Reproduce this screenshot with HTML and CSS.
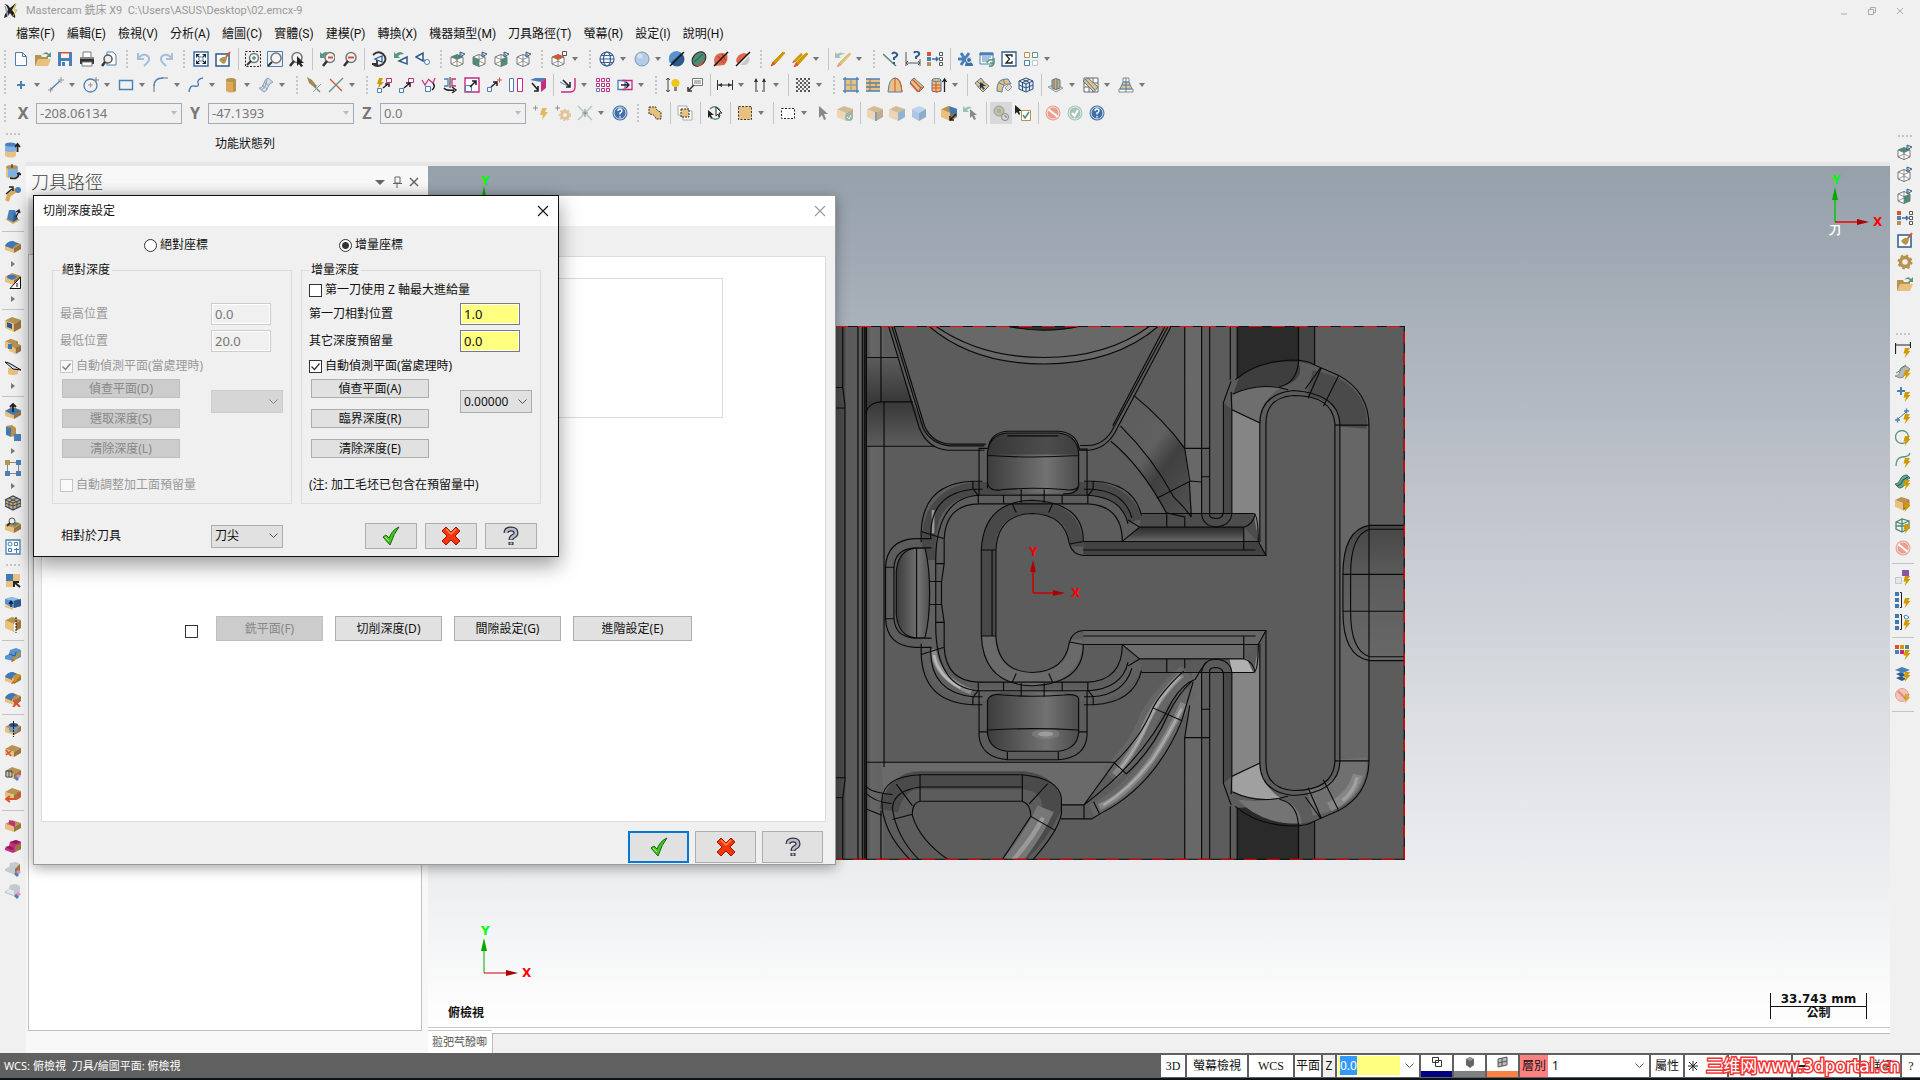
FILE: index.html
```html
<!DOCTYPE html>
<html lang="zh-Hant">
<head>
    <meta charset="UTF-8">
    <meta name="viewport" content="width=device-width, initial-scale=1.0">
    <title>Mastercam 銑床 X9</title>
    <link rel="stylesheet" href="styles.css">
</head>
<body>

    <!-- icon shapes, 16x16 each -->
    <svg class="sprite" aria-hidden="true">
        <defs>
            <path id="bolt" d="M10 6h5l-2 3h2.500l-6 7 1.500-4.500H8.500z" fill="#cf9a00"/>
            <path id="eye" d="M10 1l5 2-5 3zM11 2.500v2" fill="#dfe8f2" stroke="#3a5f88"/>
            <g id="wire" fill="none" stroke="#777"><path fill="#fff" d="M1 6l6-2.500L13 6v7l-6 2.500L1 13z"/><path d="M1 6l6 2.500L13 6M7 8.500v7M7 3.500v6M1 13l6-3 6 3" stroke-width=".8"/></g>
            <g id="box"><path d="M0 4.500L7 1l9 3-7 4z" fill="#b8924f"/><path d="M0 4.500L9 8v8l-9-4z" fill="#e8c080"/><path d="M16 4L9 8v8l7-4z" fill="#9c7440"/></g>
            <g id="slab"><path d="M0 7l7-4 9 3-7 4z" fill="#b8924f"/><path d="M0 7l9 3v5l-9-3z" fill="#e8c080"/><path d="M16 6l-7 4v5l7-4z" fill="#9c7440"/></g>
            <path id="cursor" d="M4 1v12l3-3 2 5 2-1-2-5h4z"/>
            <g id="lens" fill="none"><circle cx="8" cy="6.500" r="5" fill="#f4f4f4" stroke="#777" stroke-width="1.500"/><path d="M5 10l-4 5" stroke="#333" stroke-width="2.500"/></g>
            <g id="pen"><path d="M15 2L5 13l-2-2L13 1z" fill="#cf9a00" stroke="#cf9a00"/><path d="M3 11l2 2-4 2z" fill="#d9532f" stroke="#d9532f"/></g>
            <path id="axisplus" d="M10 3h6M13 0v6" stroke="#888"/>
        </defs>

        <symbol id="i-new" viewBox="0 0 16 16"><path d="M2.500 1.500h7l4 4v9h-11zM9.500 1.500v4h4" fill="#fff" stroke="#4a80b8"/></symbol>
        <symbol id="i-open" viewBox="0 0 16 16"><path d="M0 4h6l1 2h6v9H0z" fill="#b8924f"/><path d="M3 8h13l-3 7H0z" fill="#e8c080"/><path d="M7 4q4-5 7-1l2-2v5h-5l2-2q-3-2-6 0z" fill="#5a9580"/></symbol>
        <symbol id="i-save" viewBox="0 0 16 16"><path d="M1 1h14v14H1z" fill="#4a80b8"/><path d="M4 2h8v5H4zM4 10h8v5H4z" fill="#f5f5f5"/><path d="M3 1h10v1.500H3z" fill="#d9532f"/><path d="M5 11h3v4H5z" fill="#4a80b8"/></symbol>
        <symbol id="i-print" viewBox="0 0 16 16"><path d="M4 1h8v6H4z" fill="#fff" stroke="#777"/><path d="M1 6h14v7H1z" fill="#333"/><path d="M3 11h10v4H3z" fill="#fff" stroke="#777"/><path d="M1 6h14v2H1z" fill="#888"/></symbol>
        <symbol id="i-preview" viewBox="0 0 16 16"><path d="M6 1h6l3 3v10H6z" fill="#fff" stroke="#4a80b8"/><circle cx="7" cy="8" r="4" fill="#eee" stroke="#555" stroke-width="1.500"/><path d="M4 11l-3 4" stroke="#333" stroke-width="2.500"/></symbol>
        <symbol id="i-undo" viewBox="0 0 16 16"><path d="M2 2v6h6M2 8q3-5 8-4 5 2 2 7l-4 4" fill="none" stroke="#a6bed9" stroke-width="2"/></symbol>
        <symbol id="i-redo" viewBox="0 0 16 16"><path d="M14 2v6H8M14 8q-3-5-8-4-5 2-2 7l4 4" fill="none" stroke="#a6bed9" stroke-width="2"/></symbol>
        <symbol id="i-fit" viewBox="0 0 16 16"><path d="M1 1h14v14H1z" fill="#fff" stroke="#3a6ea5" stroke-width="1.500"/><path d="M3 3h4L3 7zM13 3v4L9 3zM3 13V9l4 4zM13 13H9l4-4z" fill="#222"/><path d="M4 4l8 8M12 4l-8 8" stroke="#222"/><path d="M6 6h4v4H6z" fill="#fff" stroke="#4a80b8"/></symbol>
        <symbol id="i-repaint" viewBox="0 0 16 16"><path d="M1 3h13v12H1z" fill="#fff" stroke="#2d5a8c" stroke-width="1.500"/><path d="M4 9q3-4 8-3 0 5-3 7-3-1-5-4z" fill="#b8924f"/><path d="M11 6l4-5" stroke="#d9532f" stroke-width="2"/></symbol>
        <symbol id="i-zoomwin" viewBox="0 0 16 16"><path d="M.5.500h15v15H.500z" fill="none" stroke="#222" stroke-dasharray="2 1.500"/><circle cx="9" cy="7" r="4.500" fill="#f4f4f4" stroke="#777" stroke-width="1.500"/><path d="M9 5v4M7 7h4" stroke="#5a9580" stroke-width="1.500"/><path d="M6 10l-4 4" stroke="#333" stroke-width="2"/></symbol>
        <symbol id="i-zoomtgt" viewBox="0 0 16 16"><path d="M.5.500h15v15H.500z" fill="none" stroke="#4a80b8"/><circle cx="9" cy="7" r="5" fill="#f4f4f4" stroke="#777" stroke-width="1.500"/><path d="M5 11l-4 4" stroke="#333" stroke-width="2"/></symbol>
        <symbol id="i-zoomsel" viewBox="0 0 16 16"><use href="#lens"/><path d="M8 5v10l2-2 2 3 2-1-2-3h3z" fill="#222"/></symbol>
        <symbol id="i-unzoom" viewBox="0 0 16 16"><use href="#lens" x="3"/><path d="M9 6.500h5" stroke="#d9532f" stroke-width="2"/><path d="M1 1v6h6L5 5q2-2 5-2-3-4-7 0z" fill="#5a9580"/></symbol>
        <symbol id="i-zoomout" viewBox="0 0 16 16"><use href="#lens" x="2"/><path d="M7 6.500h6" stroke="#d9532f" stroke-width="2"/></symbol>
        <symbol id="i-dynview" viewBox="0 0 16 16"><path d="M2 4q5-5 10-1 5 5 0 10-6 4-10 0M1 13h5v-4" fill="none" stroke="#333" stroke-width="1.800"/><path d="M4 8l7-3v6z" fill="#fff" stroke="#2d5a8c" stroke-width="1.300"/></symbol>
        <symbol id="i-prevview" viewBox="0 0 16 16"><path d="M1 1v6h6L5 5q2-2 6-2-4-4-8 0z" fill="#5a9580"/><path d="M6 10l8-4v7z" fill="#fff" stroke="#2d5a8c" stroke-width="1.500"/></symbol>
        <symbol id="i-namedview" viewBox="0 0 16 16"><path d="M1 6l7-4v8z" fill="#fff" stroke="#2d5a8c" stroke-width="1.500"/><circle cx="12" cy="11" r="2.500" fill="#fff" stroke="#4a80b8"/><path d="M8 8l3 2" stroke="#4a80b8"/></symbol>
        <symbol id="i-cubetop" viewBox="0 0 16 16"><use href="#wire"/><path d="M1 6l6-2.500L13 6 7 8.500z" fill="#4e8a74"/><use href="#eye"/></symbol>
        <symbol id="i-cubefront" viewBox="0 0 16 16"><use href="#wire"/><path d="M1 6l6 2.500v7L1 13z" fill="#4e8a74"/><use href="#eye"/></symbol>
        <symbol id="i-cuberight" viewBox="0 0 16 16"><use href="#wire"/><path d="M13 6L7 8.500v7l6-2.500z" fill="#4e8a74"/><use href="#eye"/></symbol>
        <symbol id="i-cubeiso" viewBox="0 0 16 16"><use href="#wire"/><use href="#eye"/></symbol>
        <symbol id="i-cubered" viewBox="0 0 16 16"><use href="#wire"/><path d="M1 6l6-2.500L13 6 7 8.500z" fill="#d9532f"/><path d="M11.500.500h4v4h-4z" fill="#fff" stroke="#555"/></symbol>
        <symbol id="i-globe" viewBox="0 0 16 16"><g fill="none" stroke="#3d5f8c" stroke-width="1.200"><circle cx="8" cy="8" r="7" fill="#f6f8fb"/><ellipse cx="8" cy="8" rx="3.500" ry="7"/><path d="M1 8h14M2 4.500h12M2 11.500h12"/></g></symbol>
        <symbol id="i-sphere" viewBox="0 0 16 16"><circle cx="8" cy="8" r="7" fill="#b4cbe6" stroke="#7f97b5"/><circle cx="6" cy="5" r="2.500" fill="#d3e1f1"/></symbol>
        <symbol id="i-shaded" viewBox="0 0 16 16"><circle cx="8" cy="8" r="7.500" fill="#2d5a8c"/><path d="M1 12A7.500 7.500 0 0112 2z" fill="#5b93cf"/><path d="M1 15L15 1" stroke="#111" stroke-width="1.500"/></symbol>
        <symbol id="i-shadegreen" viewBox="0 0 16 16"><ellipse cx="8" cy="8" rx="6" ry="8" transform="rotate(40 8 8)" fill="#4e8a74" stroke="#222"/><path d="M4 14q8 0 10-8-2 10-7 9z" fill="#d9532f"/><path d="M3 11L12 3" stroke="#2b5546"/></symbol>
        <symbol id="i-shadered" viewBox="0 0 16 16"><path d="M1 9q1-7 8-7l5 1q2 7-3 11l-9 1z" fill="#e0684a"/><path d="M5 5l6 7M9 3l4 7" stroke="#a83a20"/><path d="M1 15L15 1" stroke="#111" stroke-width="1.500"/></symbol>
        <symbol id="i-shadehalf" viewBox="0 0 16 16"><path d="M1 10q1-7 8-8l4 1L3 13z" fill="#e0684a"/><path d="M14 5q2 6-3 9l-6 0z" fill="#c8c8c8"/><path d="M1 15L15 1" stroke="#111" stroke-width="1.500"/></symbol>
        <symbol id="i-pencil" viewBox="0 0 16 16"><use href="#pen"/></symbol>
        <symbol id="i-pencils" viewBox="0 0 16 16"><path d="M9 2L2 9l2 2 7-7z" fill="#cf9a00"/><path d="M2 9l2 2-4 1z" fill="#d9532f"/><use href="#pen" x="1" y="1"/></symbol>
        <symbol id="i-undelete" viewBox="0 0 16 16"><g opacity=".5"><use href="#pen" x="1" y="1"/><path d="M0 1v6h6L4 5q2-2 6-2-4-3-8 0z" fill="#5a9580"/></g></symbol>
        <symbol id="i-lineq" viewBox="0 0 16 16"><path d="M0 3l13 12" stroke="#4e8a74" stroke-width="1.500"/><path d="M9 3q2-3 5 0 1 2-3 4v2M11 11v2" fill="none" stroke="#2d5a8c" stroke-width="2"/></symbol>
        <symbol id="i-dimq" viewBox="0 0 16 16"><path d="M1 1v14M15 8v7M1 12h14M3 10l-2 2 2 2M13 10l2 2-2 2" fill="none" stroke="#555"/><path d="M9 2q2-3 5 0 1 2-3 4v2" fill="none" stroke="#2d5a8c" stroke-width="2"/></symbol>
        <symbol id="i-attrs" viewBox="0 0 16 16"><path d="M0 1h4v4H0z" fill="#d9532f"/><path d="M0 6h4v4H0z" fill="#4a80b8"/><path d="M0 11h4v4H0z" fill="#b8924f"/><path d="M5 8h6M9 6l2 2-2 2" fill="none" stroke="#3a6ea5" stroke-width="1.500"/><path d="M12.500 1.500h3v3h-3zM12.500 6.500h3v3h-3zM12.500 11.500h3v3h-3z" fill="#fff" stroke="#555"/></symbol>
        <symbol id="i-config" viewBox="0 0 16 16"><path d="M4 2l8 12M12 2L4 14M1 8h13" stroke="#4a80b8" stroke-width="3"/><path d="M8 15q0-4 4-4t4 4z" fill="#3a6ea5"/><circle cx="12" cy="9" r="2.500" fill="#3a6ea5" stroke="#f0f0f0"/></symbol>
        <symbol id="i-list" viewBox="0 0 16 16"><path d="M1 2h13v11H1z" fill="#fff" stroke="#4a80b8"/><path d="M1 2h13v2H1zM3 6h9M3 8h7M3 10h5" fill="#4a80b8" stroke="#4a80b8"/><path d="M8 12q1-4 5-3l2-1v4h-4M15 12q-1 4-5 3" fill="none" stroke="#5a9580" stroke-width="1.500"/></symbol>
        <symbol id="i-sigma" viewBox="0 0 16 16"><path d="M1 1h14v14H1z" fill="#fff" stroke="#2d5a8c" stroke-width="1.300"/><path d="M11 6V4H5l3.500 4L5 12h6v-2" fill="none" stroke="#222" stroke-width="1.300"/></symbol>
        <symbol id="i-grid4" viewBox="0 0 16 16"><g fill="#fff"><path d="M1.500 1.500h5v5h-5z" stroke="#b8924f"/><path d="M9.500 1.500h5v5h-5z" stroke="#5a9580"/><path d="M1.500 9.500h5v5h-5z" stroke="#4a80b8"/><path d="M9.500 9.500h5v5h-5z" stroke="#c0c6cc"/></g></symbol>

        <symbol id="i-plus" viewBox="0 0 16 16"><path d="M8 4v8M4 8h8" stroke="#4a80b8" stroke-width="2"/></symbol>
        <symbol id="i-line" viewBox="0 0 16 16"><path d="M2 13L12 4" stroke="#4a80b8" stroke-width="1.300"/><path d="M10 3h6M13 0v6M0 13h5M2.500 10.500v5" stroke="#999"/></symbol>
        <symbol id="i-circle" viewBox="0 0 16 16"><circle cx="7.500" cy="8.500" r="6.500" fill="none" stroke="#4a80b8" stroke-width="1.300"/><path d="M5 8h5M7.500 5.500v5" stroke="#999"/><use href="#axisplus"/></symbol>
        <symbol id="i-rect" viewBox="0 0 16 16"><path d="M1.500 3.500h13v9h-13z" fill="none" stroke="#4a80b8" stroke-width="1.400"/></symbol>
        <symbol id="i-fillet" viewBox="0 0 16 16"><path d="M1 15V8M9 1h6" stroke="#999" stroke-width="1.500"/><path d="M1 9q0-8 9-8" fill="none" stroke="#4a80b8" stroke-width="1.500"/></symbol>
        <symbol id="i-spline" viewBox="0 0 16 16"><path d="M1 15q1-7 5-6 6 1 4-3-1-4 5-5" fill="none" stroke="#4a80b8" stroke-width="1.400"/></symbol>
        <symbol id="i-cyl" viewBox="0 0 16 16"><path d="M3 3h10v11q-5 3-10 0z" fill="#dba95c"/><path d="M10 3h3v11l-3 1z" fill="#b8924f"/><ellipse cx="8" cy="3" rx="5" ry="2" fill="#b8924f"/></symbol>
        <symbol id="i-surf" viewBox="0 0 16 16"><path d="M1 11q4 0 5-5 1-4 4-5l5 4q-4 1-5 5-1 4-4 5z" fill="#d5dde6" stroke="#8ea0b4"/><path d="M4 8l5 4M6 5l5 4M9 2q-1 9-6 11" fill="none" stroke="#8ea0b4"/></symbol>
        <symbol id="i-trim" viewBox="0 0 16 16"><path d="M1 0l5 3 5 6-2 2-6-5z" fill="#a38a52"/><path d="M8 9l6 6" stroke="#5a9580" stroke-width="1.200"/><path d="M15 7L7 15" stroke="#999"/></symbol>
        <symbol id="i-cross" viewBox="0 0 16 16"><path d="M2 2l12 12" stroke="#d9532f" stroke-width="1.300"/><path d="M15 1L1 15" stroke="#5a9580" stroke-width="1.300"/></symbol>
        <symbol id="i-xdyn" viewBox="0 0 16 16"><path d="M3 1h4L5 5h3L2 11l1-4H1z" fill="#cf9a00"/><path d="M10.500 1.500h5v4h-5z" fill="#fff" stroke="#c52b80"/><path d="M1.500 11.500h4v4h-4z" fill="#fff" stroke="#4a80b8"/><path d="M7 11l5-4M9 7h4v3" fill="none" stroke="#222" stroke-width="1.500"/></symbol>
        <symbol id="i-xlate" viewBox="0 0 16 16"><path d="M10.500 1.500h5v4h-5z" fill="#fff" stroke="#c52b80"/><path d="M1.500 11.500h4v4h-4z" fill="#fff" stroke="#4a80b8"/><path d="M6 11l6-5M8 6h4v4" fill="none" stroke="#222" stroke-width="1.500"/></symbol>
        <symbol id="i-rotate" viewBox="0 0 16 16"><path d="M2 3l3 5 3-5M8 2l5 4 2-5" fill="none" stroke="#c52b80" stroke-width="1.200"/><path d="M5.500 9.500h5v5h-5z" fill="#fff" stroke="#4a80b8"/><path d="M12 13q4-3 1-7" fill="none" stroke="#222" stroke-width="1.500"/></symbol>
        <symbol id="i-mirror" viewBox="0 0 16 16"><path d="M2 2h4v7H2" fill="none" stroke="#4a80b8" stroke-width="1.300"/><path d="M14 2h-4v7h4" fill="none" stroke="#c52b80" stroke-width="1.300"/><path d="M8 0v11" stroke="#222"/><path d="M2 11q2 3 10 2M10 10l4 3-4 3" fill="none" stroke="#222" stroke-width="1.400"/></symbol>
        <symbol id="i-scale" viewBox="0 0 16 16"><path d="M1 1h14v14H1z" fill="#fff" stroke="#c52b80" stroke-width="1.400"/><path d="M1.500 8.500h6v6h-6z" fill="#fff" stroke="#4a80b8"/><path d="M6 10l6-6M8 4h4v4" fill="none" stroke="#222" stroke-width="1.500"/></symbol>
        <symbol id="i-move" viewBox="0 0 16 16"><path d="M1.500 10.500h4v4h-4z" fill="#fff" stroke="#4a80b8"/><path d="M5 10l6-5M7 5h4v4" fill="none" stroke="#222" stroke-width="1.500"/><path d="M11 3h5M13.500.500v5" stroke="#d9532f"/></symbol>
        <symbol id="i-offset" viewBox="0 0 16 16"><path d="M1.500 1.500h4v13h-4z" fill="#fff" stroke="#4a80b8"/><path d="M9.500 1.500h5v13h-5z" fill="#fff" stroke="#c52b80"/></symbol>
        <symbol id="i-project" viewBox="0 0 16 16"><path d="M0 3l5-2h11l-5 4z" fill="#4a80b8"/><path d="M11 5l5-4v10l-5 4z" fill="#c52b80"/><path d="M2 6l6 7M8 9v5H4" fill="none" stroke="#222" stroke-width="1.600"/></symbol>
        <symbol id="i-xcorner" viewBox="0 0 16 16"><path d="M15 1v9q0 5-5 5H1" fill="none" stroke="#c52b80" stroke-width="1.400"/><path d="M0 5q4 3 10 4" fill="none" stroke="#4a80b8"/><path d="M3 3l7 7M10 5v5H6" fill="none" stroke="#222" stroke-width="1.500"/></symbol>
        <symbol id="i-array" viewBox="0 0 16 16"><g fill="#fff" stroke="#c52b80"><path d="M1.500 1.500h3v3h-3zM6.500 1.500h3v3h-3zM11.500 1.500h3v3h-3zM1.500 6.500h3v3h-3zM6.500 6.500h3v3h-3zM11.500 6.500h3v3h-3zM6.500 11.500h3v3h-3zM11.500 11.500h3v3h-3z"/><path d="M1.500 11.500h3v3h-3z" stroke="#4a80b8"/></g></symbol>
        <symbol id="i-stretch" viewBox="0 0 16 16"><path d="M1 3.500h7v9H1z" fill="#fff" stroke="#4a80b8" stroke-width="1.300"/><path d="M5 3.500h10v9H5" fill="none" stroke="#c52b80" stroke-width="1.300"/><path d="M4 8h8M9 5l3 3-3 3" fill="none" stroke="#222" stroke-width="1.400"/></symbol>
        <symbol id="i-bulb" viewBox="0 0 16 16"><path d="M3 1v14M1 3l2-2 2 2M1 13l2 2 2-2" fill="none" stroke="#444"/><circle cx="10.500" cy="6" r="4" fill="#f0c419"/><path d="M9 10h3v4H9z" fill="#888"/></symbol>
        <symbol id="i-note" viewBox="0 0 16 16"><path d="M5.500 1.500h10v7h-10z" fill="#fff" stroke="#777"/><path d="M7 4h7M7 6h7" stroke="#777"/><path d="M7 8l-5 5M1 10v4h4" fill="none" stroke="#333" stroke-width="1.500"/></symbol>
        <symbol id="i-dim" viewBox="0 0 16 16"><path d="M.5 3v10M15.500 3v10M1 8h14" fill="none" stroke="#333"/><path d="M1 8l4-2v4zM15 8l-4-2v4z" fill="#333"/></symbol>
        <symbol id="i-vdim" viewBox="0 0 16 16"><path d="M4 2v11M12 2v11M3 14h3M10 14h3" fill="none" stroke="#333"/><path d="M4 1l2 4H2zM12 1l2 4h-4z" fill="#333"/></symbol>
        <symbol id="i-hatch" viewBox="0 0 16 16"><path d="M1 2h14M1 6h14M1 10h14M1 14h14" stroke="#555" stroke-width="2" stroke-dasharray="2 2"/><path d="M3 4h12M3 8h12M3 12h12" stroke="#777" stroke-width="2" stroke-dasharray="2 2"/></symbol>
        <symbol id="i-mesh" viewBox="0 0 16 16"><path d="M2 2h12v12H2z" fill="#e8c080"/><path d="M2 0v16M14 0v16M0 2h16M0 14h16" stroke="#4a80b8" stroke-width="1.300"/><path d="M8 2v12M2 8h12" stroke="#7d93a5"/></symbol>
        <symbol id="i-ruled" viewBox="0 0 16 16"><path d="M1 2h14v12H1z" fill="#e8c080"/><path d="M1 2h14M1 14h14M1 6h14M1 10h14" stroke="#4a80b8" stroke-width="1.300"/><path d="M5 2v12M11 6v4" stroke="#9c7440"/></symbol>
        <symbol id="i-loft" viewBox="0 0 16 16"><path d="M1 15Q2 1 8 1t7 14z" fill="#e8c080" stroke="#4a80b8"/><path d="M8 1v14M8 1q6 0 7 14" fill="none" stroke="#d9532f"/></symbol>
        <symbol id="i-sweep" viewBox="0 0 16 16"><path d="M1 5l4-4 10 9-5 5z" fill="#e8c080" stroke="#4a80b8"/><path d="M3 2l9 9M1 6l8 9M10 15q0-4 5-5" fill="none" stroke="#d9532f" stroke-width="1.200"/></symbol>
        <symbol id="i-revolve" viewBox="0 0 16 16"><path d="M1 3h9v11q-5 2-9 0z" fill="#e8c080" stroke="#4a80b8"/><path d="M1 8h9M1 11h9M5 3v12M1 14q5 2 9 0" fill="none" stroke="#d9532f"/><ellipse cx="5.500" cy="3" rx="4.500" ry="1.500" fill="#e8c080" stroke="#4a80b8"/><path d="M13.500 15V3M11.500 5l2-3 2 3" fill="none" stroke="#222" stroke-width="1.300"/></symbol>
        <symbol id="i-surftrim" viewBox="0 0 16 16"><path d="M1 6l6-5 3 4 5 4-6 6-4-4z" fill="#d9c49a" stroke="#777"/><path d="M3 4l9 9M10 5l-6 5" stroke="#4a80b8"/><path d="M6 5v7l2-2 1 3 1-1-1-3h3z" fill="#333"/></symbol>
        <symbol id="i-surfext" viewBox="0 0 16 16"><path d="M1 14Q0 1 12 2l3 5Q6 6 6 15z" fill="#e8c080" stroke="#4a80b8"/><path d="M9 11l4-4 3 3-4 4z" fill="#ddd" stroke="#999"/><path d="M3 6l5 2M7 3l2 4" stroke="#4a80b8"/></symbol>
        <symbol id="i-surfbox" viewBox="0 0 16 16"><path d="M1 4l7-3 7 3v8l-7 3-7-3z" fill="#dfe9f4" stroke="#2d4f7c"/><path d="M1 4l7 3 7-3M8 7v8M1 8l7 3 7-3M4.500 2.500l7 3v8M11.500 2.500l-7 3v8" fill="none" stroke="#2d4f7c"/></symbol>
        <symbol id="i-stock" viewBox="0 0 16 16"><path d="M0 10l8-3 7 4-7 4z" fill="#ddd" stroke="#999"/><path d="M4 3q4-3 8 0v8q-4 3-8 0z" fill="#dba95c" stroke="#4a80b8"/><path d="M6 2v10M9 2v10" stroke="#4a80b8"/></symbol>
        <symbol id="i-stockgrid" viewBox="0 0 16 16"><path d="M1 1h14v14H1zM1 6h14M1 10h14M6 1v14M10 1v14" fill="#fff" stroke="#666"/><path d="M0 4l5-3 10 9-4 5z" fill="#e8c080" stroke="#4a80b8"/><path d="M3 3l9 10" stroke="#4a80b8"/></symbol>
        <symbol id="i-stockcone" viewBox="0 0 16 16"><path d="M5 1h6v4H5zM1 12h14v3H1z" fill="#fff" stroke="#888"/><path d="M5 5h6l3 7H2z" fill="#e8c080" stroke="#4a80b8"/><path d="M4 8h8M8 1v14" stroke="#4a80b8"/></symbol>

        <symbol id="i-boltplus" viewBox="0 0 16 16"><g opacity=".6"><path d="M9 3h5l-2 4h3l-6 8 1-5H7z" fill="#cf9a00"/><path d="M0 3h5M2.500.500v5" stroke="#555"/></g></symbol>
        <symbol id="i-gearplus" viewBox="0 0 16 16"><g opacity=".6"><circle cx="10" cy="10" r="3.500" fill="none" stroke="#d8aa60" stroke-width="3"/><circle cx="10" cy="10" r="5.500" fill="none" stroke="#d8aa60" stroke-dasharray="2 2" stroke-width="1.500"/><path d="M0 3h5M2.500.500v5" stroke="#555"/></g></symbol>
        <symbol id="i-snap" viewBox="0 0 16 16"><path d="M1 1l14 14M15 1L1 15" stroke="#a9c7bc" stroke-width="1.300"/><path d="M8 4v8M5 8h6" stroke="#888"/></symbol>
        <symbol id="i-help" viewBox="0 0 16 16"><circle cx="8" cy="8" r="7.500" fill="#3f6ea8"/><circle cx="8" cy="8" r="6" fill="none" stroke="#dfe8f2"/><path d="M6 6q0-2 2-2t2 2q0 1-2 2v1.500M8 11v1.500" fill="none" stroke="#fff" stroke-width="1.400"/></symbol>
        <symbol id="i-selall" viewBox="0 0 16 16"><path d="M2 2h7q0 4 5 5v7H9q-1-5-7-5z" fill="#e8c080" stroke="#333" stroke-dasharray="2 1"/></symbol>
        <symbol id="i-selonly" viewBox="0 0 16 16"><path d="M1 1h9v9H1zM6 6h9v9H6z" fill="#fff" stroke="#aaa"/><path d="M4 4h8v8H4z" fill="#e8c080" stroke="#333" stroke-dasharray="2 1"/></symbol>
        <symbol id="i-selinv" viewBox="0 0 16 16"><path d="M3 4q5-5 10 1M13 12q-5 5-10-1" fill="none" stroke="#5a9580" stroke-width="1.500"/><path d="M1 5v8l2-2 1 3 1-1-1-3h3z" fill="#222"/><path d="M9 2v9l2-2 1 3 1-1-1-3h3z" fill="#fff" stroke="#222"/></symbol>
        <symbol id="i-selbox" viewBox="0 0 16 16"><path d="M1.500 1.500h13v13h-13z" fill="#e8c080" stroke="#333" stroke-dasharray="2 1.500"/></symbol>
        <symbol id="i-dashbox" viewBox="0 0 16 16"><path d="M1.500 3.500h13v10h-13z" fill="#fff" stroke="#222" stroke-dasharray="2 1.500"/></symbol>
        <symbol id="i-cursor" viewBox="0 0 16 16"><use href="#cursor" fill="#888"/></symbol>
        <symbol id="i-boxok" viewBox="0 0 16 16"><g opacity=".55"><use href="#box"/><circle cx="12" cy="12" r="4" fill="#4e8a74"/><path d="M10 12l2 2 2-4" fill="none" stroke="#fff"/></g></symbol>
        <symbol id="i-boxedge" viewBox="0 0 16 16"><g opacity=".55"><use href="#box"/><path d="M9 7v9" stroke="#2d5a8c" stroke-width="2"/></g></symbol>
        <symbol id="i-boxface" viewBox="0 0 16 16"><g opacity=".55"><use href="#box"/><path d="M16 4L9 8v8l7-4z" fill="#4a80b8"/></g></symbol>
        <symbol id="i-boxbody" viewBox="0 0 16 16"><g opacity=".6"><path d="M1 4l7-3 7 3-7 4z" fill="#9dc2ea"/><path d="M1 4l7 4v8l-7-4z" fill="#7fabdc"/><path d="M15 4L8 8v8l7-4z" fill="#4a80b8"/></g></symbol>
        <symbol id="i-boxback" viewBox="0 0 16 16"><use href="#box"/><path d="M8 1l8 3v7l-7-3z" fill="#3f78b5"/><path d="M15 9l-5 5M9 11v4h4" fill="none" stroke="#222" stroke-width="1.500"/></symbol>
        <symbol id="i-sellast" viewBox="0 0 16 16"><path d="M0 1v6h6L4 5q2-2 5-2-3-3-7 0z" fill="#9fc2b4"/><path d="M7 4v9l2-2 2 4 2-1-2-4h3z" fill="#888"/></symbol>
        <symbol id="i-gauge" viewBox="0 0 16 16"><circle cx="6" cy="6" r="5" fill="#c9bda0" stroke="#8aa3b0"/><circle cx="6" cy="6" r="2" fill="#9bb3a8"/><circle cx="12" cy="12" r="3.500" fill="#ddd" stroke="#888"/><path d="M12 10v2h2" fill="none" stroke="#777"/></symbol>
        <symbol id="i-clip" viewBox="0 0 16 16"><path d="M0 0v9l2-2 2 3 1-1-1-3h3z" fill="#222"/><path d="M6.500 5.500h9v10h-9z" fill="#fff" stroke="#b8924f"/><path d="M8 10l2 3 4-6" fill="none" stroke="#4e8a74" stroke-width="1.500"/></symbol>
        <symbol id="i-no" viewBox="0 0 16 16"><circle cx="8" cy="8" r="7.500" fill="#e8a090"/><path d="M3 4l10 8" stroke="#fff" stroke-width="2"/><circle cx="8" cy="8" r="6" fill="none" stroke="#f8e0da"/></symbol>
        <symbol id="i-ok" viewBox="0 0 16 16"><circle cx="8" cy="8" r="7.500" fill="#a5c5b8"/><circle cx="8" cy="8" r="6" fill="none" stroke="#e5f0eb"/><path d="M5 8l2.500 3L11 5" fill="none" stroke="#fff" stroke-width="2"/></symbol>

        <symbol id="i-extrude" viewBox="0 0 16 16"><path d="M0 8h11v6q-5 3-11 0z" fill="#e8c080"/><path d="M0 2h11v7q-5 2-11 0z" fill="#7fb0e4"/><ellipse cx="5.500" cy="2.500" rx="5.500" ry="2" fill="#4a80b8"/><path d="M12.500 10V3M10 5l2.500-3L15 5" fill="none" stroke="#222" stroke-width="1.800"/></symbol>
        <symbol id="i-revsolid" viewBox="0 0 16 16"><path d="M1 3h12v10q-6 3-12 0z" fill="#e8c080"/><path d="M3 4h10v9H3z" fill="#7fb0e4"/><ellipse cx="7" cy="3" rx="6" ry="2" fill="#b8924f"/><path d="M7 0v4" stroke="#222"/><path d="M5 14q8 2 9-4M12 10l2-1 2 2" fill="none" stroke="#222" stroke-width="1.600"/></symbol>
        <symbol id="i-sweepsolid" viewBox="0 0 16 16"><path d="M2 15l2-6 7-5" fill="none" stroke="#dba95c" stroke-width="4"/><circle cx="13" cy="4" r="3" fill="#4a80b8"/><path d="M1 8l6-5M4 1h4v4" fill="none" stroke="#222" stroke-width="1.500"/></symbol>
        <symbol id="i-loftsolid" viewBox="0 0 16 16"><path d="M0 11l8 5 7-4-4-2z" fill="#dba95c"/><path d="M4 2h6l3 9-5 3-6-3z" fill="#4a80b8"/><path d="M9 4l4 7-5 3z" fill="#2d5a8c"/><path d="M11 9l3-6M11 4l3-2 1 3" fill="none" stroke="#222" stroke-width="1.300"/></symbol>
        <symbol id="i-filletsolid" viewBox="0 0 16 16"><use href="#slab"/><path d="M0 8q2-5 8-5l6 3q-5 0-6 5z" fill="#3f78b5"/></symbol>
        <symbol id="i-chamfer" viewBox="0 0 16 16"><use href="#slab" y="-3"/><path d="M3 2h6l3 2-5 3-5-2z" fill="#3f78b5"/><path d="M15.500 4v11.500H5z" fill="#fff" stroke="#111"/><path d="M12 10v4" stroke="#111"/></symbol>
        <symbol id="i-shell" viewBox="0 0 16 16"><use href="#box"/><path d="M2 6l5 2v5l-5-2z" fill="#2d5a8c"/></symbol>
        <symbol id="i-bool" viewBox="0 0 16 16"><use href="#box" transform="scale(.8)"/><use href="#box" transform="translate(4 4) scale(.75)"/><path d="M3 6h4v5H3z" fill="#3f78b5"/></symbol>
        <symbol id="i-draft" viewBox="0 0 16 16"><path d="M3 8h10v6q-5 2-10 0z" fill="#e8c080"/><path d="M0 2l4 1 12 7-8-1z" fill="#cfdff0" stroke="#111"/></symbol>
        <symbol id="i-thicken" viewBox="0 0 16 16"><use href="#slab" y="1"/><path d="M0 8l8-4 8 4-8 4z" fill="#3f78b5"/><path d="M8 9V2M5 4l3-3 3 3" fill="none" stroke="#222" stroke-width="1.800"/></symbol>
        <symbol id="i-pattern" viewBox="0 0 16 16"><path d="M1 1l6-1 4 3v8l-6 1-4-3z" fill="#b8924f"/><path d="M1 2l5 1v8l-5-1z" fill="#3f78b5"/><path d="M9 9h7v7H9z" fill="#4a80b8"/></symbol>
        <symbol id="i-nodes" viewBox="0 0 16 16"><path d="M2.500 2.500h11v11h-11z" fill="none" stroke="#888"/><path d="M0 0h5v5H0z" fill="#b8924f"/><path d="M11 0h5v5h-5zM0 11h5v5H0zM11 11h5v5h-5z" fill="#4a80b8"/></symbol>
        <symbol id="i-rubik" viewBox="0 0 16 16"><path d="M0 5l8-4 8 4v6l-8 4-8-4z" fill="#dba95c" stroke="#2d4f7c" stroke-width="1.300"/><path d="M0 5l8 3 8-3M8 8v7M0 8l8 3 8-3M4 3l8 4v6M12 3L4 7v6" fill="none" stroke="#2d4f7c"/></symbol>
        <symbol id="i-inspect" viewBox="0 0 16 16"><use href="#slab" y="1"/><path d="M6 5l9 1-6 3z" fill="#4e8a74"/><circle cx="7" cy="4" r="3" fill="#eee" stroke="#555"/><path d="M5 6L2 9" stroke="#333" stroke-width="2"/></symbol>
        <symbol id="i-layout" viewBox="0 0 16 16"><path d="M1 1h14v14H1z" fill="#fff" stroke="#4a80b8" stroke-width="1.300"/><path d="M9.500 3.500h3v3h-3zM3.500 9.500h3v3h-3zM9 10.500h5M11.500 9v5" fill="none" stroke="#4a80b8"/><circle cx="5" cy="5" r="2" fill="none" stroke="#4a80b8"/></symbol>
        <symbol id="i-pickface" viewBox="0 0 16 16"><path d="M1 1h7v7H1z" fill="#3f78b5"/><path d="M8 1h7v7H8zM1 8h7v6H1z" fill="#e8c080"/><path d="M15 14l-6-5M9 14V9h5" fill="none" stroke="#222" stroke-width="2"/></symbol>
        <symbol id="i-pushpull" viewBox="0 0 16 16"><path d="M0 4l7-2 9 3v6l-8 2-8-4z" fill="#5b93cf"/><path d="M0 4l7-2 6 2-5 2z" fill="#8fbcea"/><path d="M9 6l7-2v7l-7 2z" fill="#2d5a8c"/><path d="M0 10l8 3v2l-8-3z" fill="#e8c080"/><path d="M6 12V7M4 9l2-3 2 3" fill="none" stroke="#111" stroke-width="1.200"/></symbol>
        <symbol id="i-splitbox" viewBox="0 0 16 16"><use href="#box" y="-1"/><path d="M9 6l2-1v9l-2 1z" fill="#fff"/><path d="M11 0v16" stroke="#111" stroke-dasharray="2 1"/></symbol>
        <symbol id="i-stepedit" viewBox="0 0 16 16"><path d="M0 9l4-2 1-4 6-2 5 2v7l-8 4-8-2z" fill="#5b93cf"/><path d="M4 7l6 2 1-4" fill="none" stroke="#2d5a8c"/><use href="#pen" transform="translate(6 5) scale(.65)"/></symbol>
        <symbol id="i-filletedit" viewBox="0 0 16 16"><use href="#slab"/><path d="M0 8q2-5 8-5l4 2q-5 1-5 6z" fill="#3f78b5"/><use href="#pen" transform="translate(6 5) scale(.65)"/></symbol>
        <symbol id="i-filletdel" viewBox="0 0 16 16"><use href="#slab" y="-1"/><path d="M0 7q2-5 8-5l4 2q-5 1-5 6z" fill="#3f78b5"/><path d="M8 9l7 7M15 9l-7 7" stroke="#d9532f" stroke-width="2"/></symbol>
        <symbol id="i-hole" viewBox="0 0 16 16"><use href="#slab" y="-1"/><path d="M4 4h9v6q-4 3-9 0z" fill="#7a98b0"/><ellipse cx="8.500" cy="4" rx="4.500" ry="2" fill="#2d4f7c"/><path d="M8.500 0v16" stroke="#111" stroke-dasharray="2 1"/></symbol>
        <symbol id="i-boxdel" viewBox="0 0 16 16"><use href="#slab" y="-1"/><path d="M1 7l5 6M6 8l-5 4" stroke="#d9532f" stroke-width="1.500"/></symbol>
        <symbol id="i-boxerase" viewBox="0 0 16 16"><use href="#slab" y="-1"/><path d="M1 6h6v6H1zM4 6v6" fill="none" stroke="#2d4f7c"/><path d="M9 13l4-4 3 2-4 4z" fill="#e58cc0"/><path d="M9 13l2-2 3 3-2 2z" fill="#4a80b8"/></symbol>
        <symbol id="i-boxundo" viewBox="0 0 16 16"><use href="#slab" y="-2"/><path d="M5 9l-4 3 4 3M1 12h10q5-1 4-5l-3-1" fill="none" stroke="#d9532f" stroke-width="2"/></symbol>
        <symbol id="i-steppink" viewBox="0 0 16 16"><use href="#slab"/><path d="M4 3l6 2v5l-6-3z" fill="#c52b80"/></symbol>
        <symbol id="i-stepall" viewBox="0 0 16 16"><path d="M0 9l4-2 1-4 6-2 5 2v7l-8 4-8-3z" fill="#c52b80"/><path d="M5 3l6-2 5 2-6 2zM0 8l4-1 5 2-2 2z" fill="#8a1a58"/><path d="M16 4v6l-6 3V7z" fill="#9c7440"/></symbol>
        <symbol id="i-steperase" viewBox="0 0 16 16"><path d="M0 8l4-2 1-4 6-1 4 2v6l-7 4-8-3z" fill="#c4c9cd"/><path d="M15 3v7l-5 3V8z" fill="#9c7440"/><path d="M9 13l4-4 3 2-4 4z" fill="#e58cc0"/><path d="M9 13l2-2 3 3-2 2z" fill="#4a80b8"/></symbol>
        <symbol id="i-stepclear" viewBox="0 0 16 16"><path d="M0 8l4-2 1-4 6-1 4 2v6l-7 4-8-3z" fill="#c4c9cd"/><path d="M4 6l5 2v4l-8-3z" fill="#e4e7ea"/><path d="M9 13l4-4 3 2-4 4z" fill="#e58cc0"/><path d="M9 13l2-2 3 3-2 2z" fill="#4a80b8"/></symbol>

        <symbol id="i-gear" viewBox="0 0 16 16"><circle cx="8" cy="8" r="4.500" fill="none" stroke="#b8924f" stroke-width="3.500"/><circle cx="8" cy="8" r="6.500" fill="none" stroke="#b8924f" stroke-width="2" stroke-dasharray="2.500 2.600"/></symbol>
        <symbol id="i-qdim" viewBox="0 0 16 16"><path d="M.5 1v11M15.500 0v6M1 3h14" stroke="#222" stroke-width="1.200"/><use href="#bolt"/></symbol>
        <symbol id="i-qsurf" viewBox="0 0 16 16"><path d="M0 12q4 0 5-5 2-4 6-5l4 3q-4 1-5 5-1 4-5 4z" fill="#b5babf" stroke="#888"/><path d="M1 9q4-1 5-5l5-3" fill="none" stroke="#4e8a74"/><use href="#bolt"/></symbol>
        <symbol id="i-qpoint" viewBox="0 0 16 16"><path d="M6 1v8M2 5h8" stroke="#4a80b8" stroke-width="2"/><use href="#bolt"/></symbol>
        <symbol id="i-qline" viewBox="0 0 16 16"><path d="M3 11l8-7" stroke="#4e8a74"/><path d="M0 12h5M2.500 9.500v5M9 3h5M11.500.500v5" stroke="#4a80b8" stroke-width="1.300"/><use href="#bolt"/></symbol>
        <symbol id="i-qcircle" viewBox="0 0 16 16"><circle cx="7" cy="7" r="6.500" fill="none" stroke="#5a9580" stroke-width="1.300"/><use href="#bolt"/></symbol>
        <symbol id="i-qspline" viewBox="0 0 16 16"><path d="M1 14q0-8 6-9 7 0 8-4" fill="none" stroke="#5a9580" stroke-width="1.300"/><use href="#bolt"/></symbol>
        <symbol id="i-qsheet" viewBox="0 0 16 16"><path d="M0 10q4 0 5-4 2-5 7-5l3 3q-4 1-5 5-1 5-6 5z" fill="#6aa792" stroke="#35705b"/><path d="M2 12q5-1 6-6l5-3" fill="none" stroke="#225040"/><use href="#bolt"/></symbol>
        <symbol id="i-qsolid" viewBox="0 0 16 16"><use href="#box" transform="scale(.9)"/><use href="#bolt"/></symbol>
        <symbol id="i-qwire" viewBox="0 0 16 16"><path d="M1 4l6-3 7 2v7l-7 4-6-3zM1 4l6 2 7-3M7 1v13M1 8h12" fill="none" stroke="#4e8a74" stroke-width="1.300"/><use href="#bolt"/></symbol>
        <symbol id="i-qcolor" viewBox="0 0 16 16"><path d="M7 0h7v6H7z" fill="#8657a6"/><path d="M.5 7.500h6v6h-6z" fill="#e4e8ea" stroke="#c0c8cc"/><use href="#bolt"/></symbol>
        <symbol id="i-qlist" viewBox="0 0 16 16"><path d="M0 0h4v4H0zM0 6h4v4H0zM0 12h4v4H0z" fill="#3f78b5"/><path d="M5 .500h1.500v15H5" fill="none" stroke="#222"/><use href="#bolt"/></symbol>
        <symbol id="i-qlist2" viewBox="0 0 16 16"><path d="M0 0h4v4H0zM0 6h4v4H0zM0 12h4v4H0z" fill="#3f78b5"/><path d="M5 .500h1.500v15H5" fill="none" stroke="#222"/><path d="M9 2q2-2 5 1-1 3-4 2z" fill="#fff" stroke="#4a80b8"/><use href="#bolt"/></symbol>
        <symbol id="i-qpalette" viewBox="0 0 16 16"><path d="M0 1h4v4H0z" fill="#d9532f"/><path d="M5 1h4v4H5z" fill="#cf9a00"/><path d="M10 1h4v4h-4z" fill="#4e8a74"/><path d="M0 6h4v4H0z" fill="#4a80b8"/><path d="M5 6h4v4H5z" fill="#c52b80"/><use href="#bolt"/></symbol>
        <symbol id="i-qlayers" viewBox="0 0 16 16"><path d="M1 12l5-2 5 3-4 2zM1 8l5-2 5 3-4 2z" fill="#2d5a8c"/><path d="M0 4l7-3 8 3-7 3z" fill="#4a80b8"/><use href="#bolt"/></symbol>
        <symbol id="i-qno" viewBox="0 0 16 16"><circle cx="7" cy="7" r="6.500" fill="#f0c4ba" stroke="#e8a090"/><path d="M3 3l8 8" stroke="#e08a78" stroke-width="2"/><use href="#bolt" opacity=".6"/></symbol>

        <symbol id="i-tick" viewBox="0 0 20 20"><path d="M2 11l3-2 3 3q3-8 10-11-5 6-9 18z" fill="#47c51c" stroke="#0f6a0c"/><path d="M4 11l4 4" stroke="#b5f08a"/></symbol>
        <symbol id="i-cancel" viewBox="0 0 20 20"><path d="M5 1l5 5 5-5 4 4-5 5 5 5-4 4-5-5-5 5-4-4 5-5-5-5z" fill="#f4350a" stroke="#a01402"/><path d="M5 3l5 5 5-5" fill="none" stroke="#ff8a58" stroke-width="1.500"/></symbol>
        <symbol id="i-question" viewBox="0 0 20 20"><path d="M5 7q0-4 5-4t5 4q0 2-3 3.500-2 1-2 3.500M10 16v3" fill="none" stroke="#33333f" stroke-width="5"/><path d="M5 7q0-4 5-4t5 4q0 2-3 3.500-2 1-2 3M10 16.500v2" fill="none" stroke="#b9bccd" stroke-width="2.600"/></symbol>
        <symbol id="i-close" viewBox="0 0 12 12"><path d="M1 1l10 10M11 1L1 11" stroke="currentColor" stroke-width="1.100"/></symbol>
    </svg>

    <header class="titlebar">
        <svg class="logo" viewBox="0 0 16 16"><path d="M1 1q4 0 6 4l6-5-4 7q4 4 3 8-3-1-5-5-2 4-6 5 1-5 4-8Q4 2 1 1z" fill="#222"/><path d="M13 1l-2 6h3l-4 6" fill="none" stroke="#d8b02a"/><path d="M2 3l3 10" stroke="#9aa4b0" stroke-width="1.500"/></svg>
        <h1>Mastercam 銑床 X9&nbsp; C:\Users\ASUS\Desktop\02.emcx-9</h1>
        <div class="window-buttons">
            <button aria-label="最小化"><svg viewBox="0 0 12 12"><path d="M3 9h6" stroke="#aaa"/></svg></button>
            <button aria-label="還原"><svg viewBox="0 0 12 12"><path d="M2.500 4.500h5v5h-5zM4.500 4V2.500h5v5H8" fill="none" stroke="#aaa"/></svg></button>
            <button aria-label="關閉"><svg viewBox="0 0 12 12"><path d="M3 3l6 6M9 3L3 9" stroke="#aaa"/></svg></button>
        </div>
    </header>

    <nav class="menubar">
        <a href="#">檔案(F)</a><a href="#">編輯(E)</a><a href="#">檢視(V)</a><a href="#">分析(A)</a><a href="#">繪圖(C)</a><a href="#">實體(S)</a><a href="#">建模(P)</a><a href="#">轉換(X)</a><a href="#">機器類型(M)</a><a href="#">刀具路徑(T)</a><a href="#">螢幕(R)</a><a href="#">設定(I)</a><a href="#">說明(H)</a>
    </nav>

    <!-- in data-tools: "|" separator, ":" grip, "name+" button with a drop-down arrow, ">" flyout arrow -->
    <div class="toolbar" data-tools=": new open save print preview : undo redo : fit repaint | zoomwin zoomtgt zoomsel | unzoom zoomout | dynview prevview namedview : cubetop cubefront cuberight cubeiso : cubered+ : globe+ sphere+ shaded shadegreen shadered shadehalf : pencil pencils+ | undelete+ : lineq dimq attrs | config list sigma grid4+"></div>
    <div class="toolbar" data-tools=": plus+ line+ circle+ rect+ fillet+ spline+ cyl+ surf+ : trim cross+ : xdyn xlate rotate mirror scale move offset project | xcorner+ array stretch+ : bulb note | dim+ vdim+ | hatch+ : mesh ruled loft sweep revolve+ | surftrim surfext surfbox | stock+ stockgrid+ stockcone+"></div>
    <div class="toolbar coords">
        <span class="grip"></span>
        <label for="posX">X</label><input class="coord" id="posX" value="-208.06134">
        <label for="posY">Y</label><input class="coord" id="posY" value="-47.1393">
        <label for="posZ">Z</label><input class="coord" id="posZ" value="0.0">
        <div class="toolset" data-tools="boltplus gearplus snap+ help : selall | selonly | selinv | selbox+ | dashbox+ cursor boxok | boxedge boxface boxbody | boxback sellast | gauge clip | no ok help"></div>
    </div>

    <main class="workspace">
        <aside class="side-left">
            <div class="toolbar vertical" data-tools=": extrude revsolid sweepsolid loftsolid | filletsolid > chamfer > | shell bool draft > | thicken pattern > nodes > rubik inspect layout"></div>
            <div class="toolbar vertical edit-tools" data-tools=": pickface pushpull splitbox | stepedit filletedit filletdel | hole boxdel boxerase boxundo | steppink stepall steperase stepclear"></div>
        </aside>

        <div class="center">
            <div class="function-bar">功能狀態列</div>
            <div class="panes">
                <section class="panel">
                    <div class="panel-head">
                        <h2>刀具路徑</h2>
                        <button aria-label="選單"><svg viewBox="0 0 12 12"><path d="M1 4h10L6 9z" fill="#666"/></svg></button>
                        <button aria-label="釘選"><svg viewBox="0 0 12 12"><path d="M4 1h5v6H4zM2 7.500h9M6 8v4" fill="none" stroke="#666"/></svg></button>
                        <button aria-label="關閉"><svg viewBox="0 0 12 12"><path d="M2 2l8 8M10 2l-8 8" stroke="#666" stroke-width="1.500"/></svg></button>
                    </div>
                    <div class="panel-tools"></div>
                    <div class="panel-list"></div>
                </section>

                <section class="view">
                    <div class="canvas">
                        <svg class="gnomon gnomon-top" viewBox="0 0 60 60"><text x="8" y="12" class="ax-y">Y</text><path d="M11 55V25" stroke="#0a0"/><path d="M8 28l3-15 3 15z" fill="#0a0"/></svg>
                        <svg class="gnomon gnomon-tool" viewBox="0 0 60 66"><text x="8" y="12" class="ax-y">Y</text><path d="M11 50V25" stroke="#0c0" stroke-width="1.500"/><path d="M8 28l3-13 3 13z" fill="#0a0"/><path d="M11 50h25" stroke="#e00" stroke-width="1.500"/><path d="M33 47l12 3-12 3z" fill="#a00"/><text x="49" y="54" class="ax-x">X</text><text x="5" y="62" class="ax-t">刀</text></svg>
                        <svg class="gnomon gnomon-view" viewBox="0 0 60 60"><text x="8" y="12" class="ax-y">Y</text><path d="M11 50V25" stroke="#0a0"/><path d="M8 28l3-13 3 13z" fill="#0a0"/><path d="M11 50h25" stroke="#c00"/><path d="M33 47l12 3-12 3z" fill="#a00"/><text x="49" y="54" class="ax-x">X</text></svg>

                        <!-- mould cavity, seen from above; lower half of the slot mirrors the upper one -->
                        <svg class="model" viewBox="40 46 1488 1492" preserveAspectRatio="none">
                            <defs>
                                <linearGradient id="gv" x2="0" y2="1"><stop offset="0" stop-color="#2c2c2c"/><stop offset=".5" stop-color="#454545"/><stop offset="1" stop-color="#6a6a6a"/></linearGradient>
                                <linearGradient id="gr" x2="0" y2="1"><stop offset="0" stop-color="#464646"/><stop offset=".4" stop-color="#5c5c5c"/><stop offset="1" stop-color="#686868"/></linearGradient>
                                <linearGradient id="gh"><stop offset="0" stop-color="#3c3c3c"/><stop offset=".65" stop-color="#727272"/><stop offset="1" stop-color="#4c4c4c"/></linearGradient>
                                <linearGradient id="gs" x2="0" y2="1"><stop offset="0" stop-color="#5c5c5c"/><stop offset=".5" stop-color="#383838"/><stop offset="1" stop-color="#5c5c5c"/></linearGradient>
                                <linearGradient id="gw" x2="1" y2="1"><stop offset="0" stop-color="#5c5c5c"/><stop offset=".45" stop-color="#606060"/><stop offset=".6" stop-color="#404040"/><stop offset="1" stop-color="#555"/></linearGradient>
                                <linearGradient id="gb"><stop offset="0" stop-color="#4a4a4a"/><stop offset=".3" stop-color="#666"/><stop offset="1" stop-color="#626262"/></linearGradient>
                                <g id="half-fill">
                                    <path d="M1090 46h160v120l-100 30-60-5z" fill="#2a2a2a"/>
                                    <path d="M1250 46h42v110l-42-10z" fill="#444"/>
                                    <path d="M953 46h44v524h-24l-20-180z" fill="#686868"/>
                                    <path d="M1054 260l22 20v290q-10 37-40 37l-18-30 18 5q18-5 18-20z" fill="#484848"/>
                                    <path d="M1076 280l73 38v340l-17-88h-56z" fill="#858585"/>
                                    <path d="M1358 792V320h76v472z" fill="#666"/>
                                </g>
                                <g id="half-lines">
                                    <path d="M953 46v342l13 90M997 46v524q4 37 39 37 36-3 40-37V280l-2-50M1018 46v530q2 8 18 8 18-2 18-20V260l20-60M1072 46v150M1090 46v145M1250 46v100q-5 60-50 70M1292 46v109"/>
                                    <path d="M1434 792V325q0-95-79-141l-65-30q-15-13-60-13-90 4-145 55M1078 236q70-35 145-12M1358 792V320q-3-85-120-94-88 9-89 92v332M1345 792V318q-7-78-107-78-73 5-73 78v369M1076 280l75 38M1345 323h89M1268 222l40-60M1275 248l34-84M1315 270l40-86"/>
                                    <path d="M688 648h457l20 39H688M688 672h450M835 608h272v64M840 570h292q13 0 13 80M1107 608q25-8 30-38M790 648l45-40-30-20M906 570v38M953 388h65M997 467h21M953 582v26"/>
                                    <path d="M460 792V672q5-100 95-102 85 2 97 85 8 30 36 32M422 792V672q6-136 133-139 135 7 133 115M422 672h38M652 655l36-7M503 543l10 24M526 503v37M586 503v37M608 543l-10 24"/>
                                    <path d="M265 650v-30q5-135 135-140h25M290 640q-5-125 110-138h25M303 792v-80q-3-185 112-193h285q90 6 105 80M318 792v-30l7-52v-70q5-95 90-97h285q90 5 90 105M690 480h25q105 5 125 95M690 502h20q85 5 105 80M400 480v20l14 20v22M480 519v24M633 519v24M714 480v22l-14 18v22M265 620l58 20M303 710h22M288 760h30"/>
                                    <path d="M172 792v-72q3-75 75-80h45M194 792v-72q3-50 53-54h45M172 720h22M200 792v-60q5-60 50-65h25q12 50 12 125M253 668v124"/>
                                    <path d="M1528 603h-93q-69 12-69 137v52M1528 614h-93q-49 16-49 126v52"/>
                                </g>
                            </defs>
                            <path d="M40 46h1488v1492H40z" fill="#5c5c5c"/>
                            <path d="M40 46h27v1492H40z" fill="#4b4b4b"/>
                            <path d="M120 46h48v1492h-48z" fill="url(#gb)"/>
                            <path d="M120 134h85l38 124H120zM120 258h123l50 124H120z" fill="url(#gs)"/>
                            <path d="M160 1265h610l-75 118h-65q-30-80-110-82H260q-80 5-92 60z" fill="#6a6a6a"/>
                            <path d="M285 46q115 106 300 106T885 46z" fill="#686868"/>
                            <path d="M480 46q105 24 210 0z" fill="#303030"/>
                            <path d="M820 240q90 70 133 148l13 90 28 92h-88q-60-120-146-202l25-43z" fill="url(#gw)"/>
                            <use href="#half-fill"/>
                            <use href="#half-fill" transform="matrix(1 0 0 -1 0 1584)"/>
                            <path d="M840 570h292l13 80-38-42H835z" fill="#4c4c4c"/>
                            <path d="M835 608h272v40H790z" fill="url(#gv)"/>
                            <path d="M688 648h457l20 39H688z" fill="#424242"/>
                            <path d="M688 897h477l-20 39H688z" fill="#666"/>
                            <path d="M790 936h317v40H835z" fill="#6c6c6c"/>
                            <path d="M835 976h272l38-42-13 80H840z" fill="#5a5a5a"/>
                            <path d="M1070 976h45l17 38h-55z" fill="#b0b0b0"/>
                            <path d="M1528 603h-93q-69 12-69 137v104q0 125 69 137h93z" fill="url(#gr)"/>
                            <g fill="none" stroke="#484848">
                                <path d="M285 900V640q5-130 130-140h290q95 5 120 90" stroke-width="36"/>
                                <path d="M285 700v245q5 125 130 130h290q95-5 120-90" stroke="#606060" stroke-width="36"/>
                                <path d="M441 912V672q4-118 114-120 115 5 115 110" stroke-width="34"/>
                                <path d="M441 912q4 118 114 120 115-5 115-110" stroke="#6a6a6a" stroke-width="34"/>
                                <path d="M180 1400q20-90 90-85h260q80 10 75 80-40 90-110 150" stroke="#4a4a4a" stroke-width="50"/>
                                <path d="M590 1395q-30 70-90 150" stroke="#777" stroke-width="46"/>
                                <path d="M296 950q8 80 100 118" stroke="#8c8c8c" stroke-width="16"/>
                                <path d="M298 965q12 60 70 92" stroke="#b8b8b8" stroke-width="7"/>
                                <path d="M296 560v65" stroke="#999" stroke-width="7"/>
                                <path d="M505 1538q50-60 78-118" stroke="#9a9a9a" stroke-width="12"/>
                                <path d="M1280 205q120 25 112 125" stroke="#4a4a4a" stroke-width="72"/>
                                <path d="M1280 1379q120-25 112-125" stroke="#707070" stroke-width="72"/>
                                <path d="M1330 1390q60-30 75-90" stroke="#868686" stroke-width="26"/>
                                <path d="M1365 1372q30-25 38-65" stroke="#a0a0a0" stroke-width="9"/>
                            </g>
                            <path d="M1095 190q60-50 155-44 20 50-45 70-70-10-125 18z" fill="#3e3e3e"/>
                            <path d="M1078 240q45-30 125-22-50 35-54 98l-73-38z" fill="#6e6e6e"/>
                            <path d="M1078 1345q45 30 125 20-50-35-54-98l-73 40z" fill="#a0a0a0"/>
                            <path d="M1092 1370q60 70 165 66 0-50-55-70-60 12-110 4z" fill="#747474"/>
                            <path d="M438 400q5-50 50-55h135q48 5 53 55v90q-10 25-40 25H475q-32-5-37-30z" fill="url(#gh)"/>
                            <path d="M438 405q5-55 50-60h135q48 5 53 60z" fill="#333" opacity=".6"/>
                            <path d="M438 1184q5 45 50 50h135q48-5 53-50v-90q-10-22-40-25H475q-32 5-37 30z" fill="url(#gh)"/>
                            <ellipse cx="590" cy="1186" rx="36" ry="14" fill="#999" opacity=".35"/>
                            <ellipse cx="590" cy="1186" rx="20" ry="7" fill="#bbb" opacity=".5"/>
                            <path d="M200 730q5-65 50-65h25q14 60 14 125t-14 127h-25q-50-10-50-80z" fill="url(#gh)"/>
                            <path d="M960 1015q-75 70-100 125-30 90-105 160" fill="none" stroke="#666" stroke-width="50"/>
                            <path d="M965 1065q-40 90-75 155-90 140-180 180" fill="none" stroke="#666" stroke-width="36"/>
                            <path d="M945 1020q-60 60-90 130-35 90-85 150M950 1100q-40 90-75 145-70 110-145 145" fill="none" stroke="#858585" stroke-width="17"/>
                            <path d="M940 1025q-55 60-82 125-35 85-75 135M945 1115q-35 75-75 140-60 85-130 130" fill="none" stroke="#a8a8a8" stroke-width="7"/>
                            <g class="edges">
                                <use href="#half-lines"/>
                                <use href="#half-lines" transform="matrix(1 0 0 -1 0 1584)"/>
                                <path d="M60 46v170l6 50v1050l-6 50v172M40 218h20M40 275h26M40 1308h26M40 1364h20M100 46v1492M122 46v1492M160 46v212M160 1400v138M168 258v1020M1366 740h162M1366 843h162M450 672v240"/>
                                <path d="M112 46v1492M118 46v1492" stroke-width="4"/>
                                <path d="M120 134h84M120 290q8-32 45-32h78M122 382h178M120 1265h650M285 46q115 106 300 106T885 46M302 46q118 88 283 88T862 46M490 46q95 24 190 0"/>
                                <path d="M180 46l80 285q22 58 75 62h95M188 46l82 285q20 44 70 50h90M194 46l80 280q20 48 70 50h90M918 46L770 345q-25 45-70 48h-25M910 46L762 340q-22 38-62 40h-20M902 46L765 325"/>
                                <path d="M416 518V388l24 0q5-44 50-48h133q48 4 55 50h20v128M438 500V400q5-50 50-55h135q48 5 53 55v90q0 25-40 25M440 408q115 8 236 0M438 485q5 25 40 18 75-7 160 0 40 5 38-15M490 353h133"/>
                                <path d="M416 1066v125q5 60 74 67h133q70-5 75-67v-125M438 1090v94q5 45 50 50h135q48-5 53-50v-94M438 1095q5-25 40-18 75 7 160 0 40-5 38 15M440 1175q115-8 236 0M490 1236v22M623 1236v22M416 1180h22M676 1180h22"/>
                                <path d="M820 240q80 70 133 148M785 325q85 90 140 200 30 30 45 55M760 368q80 70 145 200l50 12M880 527l88-48 30 3M965 478l5 100"/>
                                <path d="M950 1010q-60 60-80 103-30 80-100 153l-80 118M975 1035q-40 40-65 95-40 100-110 168M975 1040l-30 110q-70 180-210 257l-25 16h-80M870 1113l76 36M770 1267l30 30M690 1384v38M715 1375l15 33M630 1384h60q160-130 230-290 30-50 60-60 15-30 30-50"/>
                                <path d="M262 1300h267q95 10 102 65v45q-10 50-75 128M262 1334h267M262 1374h267q22 8 22 42l-75 122M262 1300v74M529 1300v74M595 1325l-48 56M551 1416l65 40M262 1300q-95 5-100 70 0 90 75 168M262 1334q-70 10-72 60 10 80 70 144M262 1374q-22 5-20 40 20 70 95 124M200 1326l42 60M190 1425l52-15M120 1330q10 20 70 25M120 1350q20 25 68 30M120 1395l42 18"/>
                            </g>
                            <path class="frame-dark" d="M40 47h1486v1489H40"/>
                            <path class="frame-red" d="M40 47h1486v1489H40"/>
                        </svg>
                        <svg class="gnomon gnomon-origin" viewBox="0 0 60 60"><text x="7" y="13" class="ax-x">Y</text><path d="M11 50V25M11 50h22" stroke="#c00" stroke-width="1.500"/><path d="M8 29l3-12 3 12zM31 47l12 3-12 3z" fill="#a00"/><text x="49" y="54" class="ax-x">X</text></svg>

                        <strong class="view-name">俯檢視</strong>
                        <div class="scale-bar"><span>33.743 mm</span><span>公制</span></div>
                    </div>
                    <div class="view-tabs"><button>翋弝芞醱啣</button><span></span></div>
                </section>
            </div>
        </div>

        <aside class="side-right">
            <div class="toolbar vertical views" data-tools=": cubetop cubeiso cuberight attrs repaint gear open"></div>
            <div class="toolbar vertical" data-tools=": qdim qsurf qpoint qline qcircle qspline qsheet qsolid qwire no | qcolor qlist qlist2 | qpalette qlayers qno |"></div>
        </aside>
    </main>

    <footer class="statusbar">
        <span class="status-text">WCS: 俯檢視&nbsp; 刀具/繪圖平面: 俯檢視</span>
        <button class="c24">3D</button>
        <button class="c60">螢幕檢視</button>
        <button class="c44">WCS</button>
        <button class="c26">平面</button>
        <label class="z-label" for="zDepth">Z</label>
        <span class="z-box"><input id="zDepth" value="0.0"></span>
        <button class="swatch navy" aria-label="線色"><svg viewBox="0 0 12 12"><path d="M1.500 1.500h6v5h-6zM4.500 4.500h6v6h-6z" fill="none" stroke="#333"/></svg></button>
        <button class="swatch gray" aria-label="實體色"><svg viewBox="0 0 12 12"><path d="M2 3l4-2 4 2v6l-4 3-4-3z" fill="#666"/><path d="M2 3l4-2 4 2-4 2z" fill="#999"/></svg></button>
        <button class="swatch orange" aria-label="曲面色"><svg viewBox="0 0 12 12"><path d="M1 3l9-2v8l-9 2zM1 7l9-2M5 2v8" fill="#bbb" stroke="#555"/></svg></button>
        <label class="level-label" for="level">層別</label>
        <select class="level" id="level"><option>1</option></select>
        <button class="c32">屬性</button>
        <button class="c42 style" aria-label="點型"><svg viewBox="0 0 12 12"><path d="M6 1v10M1 6h10M2 2l8 8M10 2l-8 8" stroke="#222"/></svg></button>
        <button class="c62 style" aria-label="線型"><svg viewBox="0 0 12 12"><path d="M0 6h12" stroke="#222"/></svg></button>
        <button class="c66 style" aria-label="線寬"><svg viewBox="0 0 12 12"><path d="M0 6h12" stroke="#222" stroke-width="2"/></svg></button>
        <button class="c39">群組</button>
        <button class="c18">?</button>
        <span class="site-mark">三维网www.3dportal.cn</span>
    </footer>
    <div class="taskbar"></div>

    <section class="dialog dialog-back">
        <header><h3></h3><button aria-label="關閉"><svg><use href="#i-close"/></svg></button></header>
        <div class="page">
            <div class="page-box"></div>
            <div class="page-row">
                <input type="checkbox" aria-label="銑平面">
                <button disabled>銑平面(F)</button>
                <button>切削深度(D)</button>
                <button>間隙設定(G)</button>
                <button class="wide">進階設定(E)</button>
            </div>
        </div>
        <div class="actions">
            <button class="default" aria-label="確定"><svg><use href="#i-tick"/></svg></button>
            <button aria-label="取消"><svg><use href="#i-cancel"/></svg></button>
            <button aria-label="說明"><svg><use href="#i-question"/></svg></button>
        </div>
    </section>

    <section class="dialog dialog-front">
        <header><h3>切削深度設定</h3><button aria-label="關閉"><svg><use href="#i-close"/></svg></button></header>
        <form class="depth">
            <label class="mode"><input type="radio" name="mode">絕對座標</label>
            <label class="mode"><input type="radio" name="mode" checked>增量座標</label>

            <fieldset disabled>
                <legend>絕對深度</legend>
                <span class="full"></span>
                <label for="zMax">最高位置</label><input type="text" id="zMax" value="0.0">
                <label for="zMin">最低位置</label><input type="text" id="zMin" value="20.0">
                <label class="full"><input type="checkbox" checked>自動偵測平面(當處理時)</label>
                <div class="stack">
                    <button type="button" disabled>偵查平面(D)</button>
                    <button type="button" disabled>選取深度(S)</button>
                    <button type="button" disabled>清除深度(L)</button>
                </div>
                <select aria-label="深度清單"></select>
                <label class="full last"><input type="checkbox">自動調整加工面預留量</label>
            </fieldset>

            <fieldset>
                <legend>增量深度</legend>
                <label class="full"><input type="checkbox">第一刀使用 Z 軸最大進給量</label>
                <label for="first">第一刀相對位置</label><input type="text" id="first" value="1.0">
                <label for="other">其它深度預留量</label><input type="text" id="other" value="0.0">
                <label class="full"><input type="checkbox" checked>自動偵測平面(當處理時)</label>
                <div class="stack">
                    <button type="button">偵查平面(A)</button>
                    <button type="button">臨界深度(R)</button>
                    <button type="button">清除深度(E)</button>
                </div>
                <select aria-label="臨界深度"><option>0.00000</option></select>
                <span class="full last">(注: 加工毛坯已包含在預留量中)</span>
            </fieldset>
        </form>
        <div class="actions">
            <label for="relative">相對於刀具</label>
            <select id="relative"><option>刀尖</option></select>
            <button aria-label="確定"><svg><use href="#i-tick"/></svg></button>
            <button aria-label="取消"><svg><use href="#i-cancel"/></svg></button>
            <button aria-label="說明"><svg><use href="#i-question"/></svg></button>
        </div>
    </section>

    <script src="script.js"></script>
</body>
</html>
```
FILE: styles.css
```css
* {
    box-sizing: border-box;
}
body {
    margin: 0;
    height: 100vh;
    display: flex;
    flex-direction: column;
    overflow: hidden;
    background: #f0f0f0;
    font-family: "Noto Sans", "Noto Sans CJK TC", sans-serif;
    font-size: 12px;
    line-height: 16px;
    color: #111;
}
button, input, select {
    font: inherit;
    color: inherit;
    margin: 0;
}
h1, h2, h3 {
    margin: 0;
    font-size: 12px;
    font-weight: normal;
}
.sprite {
    position: absolute;
    width: 0;
    height: 0;
}

/* title and menu */
.titlebar, .menubar {
    font-family: Roboto, "Noto Sans CJK TC", sans-serif;
}
.titlebar {
    display: flex;
    align-items: center;
    height: 22px;
    padding: 0 6px 0 3px;
}
.titlebar h1 {
    flex: 1;
    color: #999;
    font-size: 11px;
}
.logo {
    width: 16px;
    height: 16px;
    margin-right: 7px;
}
.window-buttons button {
    width: 28px;
    padding: 0;
    border: 0;
    background: none;
}
.window-buttons svg, .panel-head svg {
    width: 12px;
    height: 12px;
    display: block;
    margin: auto;
}
.window-buttons {
    display: flex;
}
.menubar {
    display: flex;
    align-items: center;
    gap: 12px;
    height: 24px;
    padding-left: 16px;
}
.menubar a {
    color: #111;
    text-decoration: none;
    white-space: nowrap;
}

/* toolbars */
.toolbar, .toolset {
    display: flex;
    align-items: center;
}
.toolbar {
    height: 26px;
}
.tool {
    display: flex;
    align-items: center;
    width: 22px;
    height: 22px;
    padding: 0 3px;
    border: 0;
    background: none;
    flex: none;
}
.tool svg {
    width: 16px;
    height: 16px;
    flex: none;
}
.tool.more {
    width: 35px;
}
.tool.more::after, .flyout::after {
    content: "";
    margin-left: 5px;
    border: 3px solid transparent;
    border-top: 4px solid #777;
    border-bottom: 0;
}
.tool.on {
    background: #d8d8d8;
}
.grip {
    width: 13px;
    height: 18px;
    flex: none;
    background: repeating-linear-gradient(#c4c4c4 0 2px, transparent 2px 4px) center / 2px 100% no-repeat;
}
.grip:first-child {
    width: 10px;
}
.sep {
    width: 8px;
    height: 22px;
    flex: none;
    background: linear-gradient(#c4c4c4, #c4c4c4) center / 1px 100% no-repeat;
}
.coords {
    height: 28px;
    padding-top: 2px;
}
.coords label {
    width: 26px;
    text-align: center;
    font-size: 16px;
    font-weight: bold;
    color: #777;
}
.coord {
    width: 146px;
    height: 21px;
    padding: 0 3px;
    border: 1px solid #a0abb8;
    color: #777;
    font-size: 13px;
    background: #f0f0f0 url("data:image/svg+xml,%3Csvg xmlns='http://www.w3.org/2000/svg' width='6' height='4'%3E%3Cpath d='M0 0h6L3 4z' fill='%23bbb'/%3E%3C/svg%3E") right 4px center no-repeat;
}
.coords .toolset {
    margin-left: 4px;
}
.vertical {
    flex-direction: column;
    height: auto;
    width: 26px;
}
.vertical .grip, .vertical .grip:first-child {
    width: 14px;
    height: 10px;
    background: repeating-linear-gradient(90deg, #c4c4c4 0 2px, transparent 2px 4px) center / 100% 2px no-repeat;
}
.vertical .sep {
    width: 22px;
    height: 8px;
    background: linear-gradient(#c4c4c4, #c4c4c4) center / 100% 1px no-repeat;
}
.flyout {
    height: 13px;
    padding: 0;
    border: 0;
    background: none;
    display: flex;
    align-items: center;
}
.flyout::after {
    margin: 0;
    border: 3px solid transparent;
    border-left: 4px solid #777;
    border-right: 0;
}
.edit-tools {
    margin-top: 2px;
}

/* work area */
.workspace {
    flex: 1;
    min-height: 0;
    display: flex;
}
.side-left {
    width: 26px;
    padding-top: 3px;
}
.side-right {
    width: 30px;
    padding-top: 5px;
}
.views {
    width: 30px;
    margin-bottom: 34px;
}
.center {
    flex: 1;
    min-width: 0;
    display: flex;
    flex-direction: column;
}
.function-bar {
    height: 40px;
    padding: 10px 189px;
    border-bottom: 4px solid #e6e6e6;
}
.panes {
    flex: 1;
    min-height: 0;
    display: flex;
}
.panel {
    width: 402px;
    display: flex;
    flex-direction: column;
    padding: 0 6px 22px 2px;
    background: #f8f8f8;
}
.panel-head {
    display: flex;
    align-items: center;
    height: 32px;
    padding-left: 3px;
}
.panel-head h2 {
    flex: 1;
    font-size: 18px;
    font-weight: 300;
    color: #444;
}
.panel-head button {
    width: 17px;
    padding: 0;
    border: 0;
    background: none;
}
.panel-tools {
    height: 56px;
    background: #e8e8e8;
}
.panel-list {
    flex: 1;
    border: 1px solid #bfbfbf;
    background: #fff;
}
.view {
    flex: 1;
    min-width: 0;
    display: flex;
    flex-direction: column;
}
.canvas {
    flex: 1;
    position: relative;
    overflow: hidden;
    background: linear-gradient(#95a0aa, #c1c5ce 40%, #d9dce0 62%, #eeeff1 84%, #fff);
    border-bottom: 1px solid #c8c8c8;
}
.gnomon {
    position: absolute;
    width: 60px;
    height: 60px;
    font: bold 12px "DejaVu Sans", sans-serif;
}
.gnomon-top {
    left: 45px;
    top: 7px;
}
.gnomon-tool {
    right: 6px;
    top: 6px;
    height: 66px;
}
.gnomon-view {
    left: 45px;
    bottom: 44px;
}
.gnomon-origin {
    left: 594px;
    top: 377px;
}
.ax-x {
    fill: #f00;
}
.ax-y {
    fill: #0f0;
}
.ax-t {
    fill: #fff;
}
.model {
    position: absolute;
    left: 407px;
    top: 160px;
    width: 570px;
    height: 534px;
}
.edges {
    fill: none;
    stroke: #0a0a0a;
    stroke-width: 3;
}
.frame-dark, .frame-red {
    fill: none;
    stroke: #111;
    stroke-width: 3;
}
.frame-red {
    stroke: #f00;
    stroke-dasharray: 34 26;
}
.view-name {
    position: absolute;
    left: 20px;
    bottom: 6px;
}
.scale-bar {
    position: absolute;
    right: 23px;
    bottom: 8px;
    width: 97px;
    height: 26px;
    border: solid #111;
    border-width: 0 1px;
    text-align: center;
    font: bold 12px/13px "DejaVu Sans", "Noto Sans CJK TC", sans-serif;
}
.scale-bar span {
    display: block;
}
.scale-bar span:first-child {
    border-bottom: 1px solid #111;
    white-space: nowrap;
}
.view-tabs {
    display: flex;
    height: 25px;
    background: #fff;
    border-top: 2px solid #fff;
}
.view-tabs button {
    width: 64px;
    padding: 0 4px;
    border: 0;
    border-top: 1px solid #c8c8c8;
    background: #fff;
    font-size: 11px;
    color: #555;
    text-align: left;
    white-space: nowrap;
}
.view-tabs span {
    flex: 1;
    margin-top: 3px;
    border: solid #bbb;
    border-width: 1px 0 0 1px;
    background: #f0f0f0;
}

/* status bar */
.statusbar {
    position: relative;
    display: flex;
    align-items: center;
    gap: 2px;
    height: 25px;
    background: #606060;
}
.status-text {
    flex: 1;
    padding-left: 4px;
    color: #fff;
    font-size: 11px;
}
.statusbar button {
    height: 22px;
    padding: 0;
    border: 0;
    background: #fff;
    font-family: "Liberation Serif", "Noto Sans CJK TC", serif;
    white-space: nowrap;
    overflow: hidden;
}
.c18 { width: 18px; }
.c24 { width: 24px; }
.c26 { width: 26px; }
.c32 { width: 32px; }
.c39 { width: 39px; }
.c42 { width: 42px; }
.c44 { width: 44px; }
.c60 { width: 60px; }
.c62 { width: 62px; }
.c66 { width: 66px; }
.style svg {
    width: 12px;
    height: 12px;
    display: block;
    margin-left: 2px;
}
.z-label, .level-label {
    height: 22px;
    line-height: 22px;
    text-align: center;
    background: #f0f0f0;
}
.z-label {
    width: 12px;
}
.level-label {
    width: 28px;
    background: #ff8080;
}
.z-box, .level {
    height: 22px;
    border: 0;
    border-radius: 0;
    appearance: none;
    background: #fff url("data:image/svg+xml,%3Csvg xmlns='http://www.w3.org/2000/svg' width='9' height='6'%3E%3Cpath d='M.5.500l4 4 4-4' fill='none' stroke='%23555'/%3E%3C/svg%3E") right 5px center no-repeat;
}
.z-box {
    width: 82px;
    padding: 1px 0 0 1px;
}
.z-box input {
    width: 62px;
    height: 19px;
    padding: 0 2px;
    border: 0;
    background: linear-gradient(#3399ff, #3399ff) 2px center / 17px 100% no-repeat #ffff80;
    color: #fff;
}
.level {
    width: 101px;
    padding: 0 4px;
    margin-left: -2px;
}
.statusbar .swatch {
    width: 31px;
    border-bottom: 6px solid #000080;
    padding-bottom: 1px;
}
.statusbar .gray {
    border-color: #808080;
}
.statusbar .orange {
    border-color: #ff8040;
}
.swatch svg {
    width: 12px;
    height: 12px;
    display: block;
    margin: auto;
}
.site-mark {
    position: absolute;
    right: 20px;
    top: 3px;
    font: 17px/20px "DejaVu Sans", "Noto Sans CJK SC", sans-serif;
    color: #fff;
    -webkit-text-stroke: 3px #e33;
    paint-order: stroke fill;
}
.taskbar {
    height: 2px;
    background: #0b1418;
}

/* dialogs */
.dialog {
    position: absolute;
    left: 33px;
    background: #f0f0f0;
    display: flex;
    flex-direction: column;
}
.dialog header {
    display: flex;
    align-items: center;
    height: 30px;
    padding: 0 9px;
    background: #fff;
}
.dialog h3 {
    flex: 1;
}
.dialog header button {
    padding: 0;
    border: 0;
    background: none;
}
.dialog header svg {
    width: 12px;
    height: 12px;
    display: block;
}
.dialog-back {
    top: 195px;
    width: 803px;
    height: 670px;
    border: 1px solid #999;
    box-shadow: 0 3px 12px rgba(0, 0, 0, 0.35);
}
.dialog-back header {
    color: #999;
}
.dialog-front {
    top: 195px;
    width: 526px;
    height: 362px;
    border: 1px solid #111;
    box-shadow: 0 8px 20px rgba(0, 0, 0, 0.4);
}
.dialog button:not(header button) {
    padding: 0;
    border: 1px solid #adadad;
    background: #e1e1e1;
}
.dialog button:disabled:not(header button) {
    border-color: #bfbfbf;
    background: #ccc;
    color: #888;
}
.page {
    flex: 1;
    margin: 30px 9px 0 7px;
    padding: 21px 102px 0 19px;
    border: 1px solid #dcdcdc;
    background: #fff;
}
.page-box {
    height: 140px;
    border: 1px solid #dcdcdc;
}
.page-row {
    display: flex;
    align-items: center;
    gap: 12px;
    margin: 198px 0 0 124px;
}
.page-row input {
    margin: 5px 6px 0 0;
}
.page-row button {
    width: 107px;
    height: 25px;
}
.page-row .wide {
    width: 119px;
}
.actions {
    display: flex;
    align-items: center;
}
.dialog-back .actions {
    justify-content: flex-end;
    gap: 6px;
    height: 42px;
    padding: 8px 12px 0 0;
}
.dialog-back .actions button {
    width: 61px;
    height: 32px;
}
.dialog-back .actions .default {
    border: 2px solid #0078d7;
}
.dialog-front .actions {
    gap: 8px;
    padding: 19px 0 0 27px;
}
.dialog-front .actions label {
    width: 142px;
}
.dialog-front .actions select {
    margin-right: 74px;
}
.dialog-front .actions button {
    width: 52px;
    height: 26px;
}
.actions svg {
    width: 20px;
    height: 20px;
    display: block;
    margin: auto;
}
.depth {
    display: grid;
    grid-template-columns: 240px 240px;
    column-gap: 9px;
    padding: 11px 17px 0 18px;
}
.mode {
    display: flex;
    align-items: center;
    gap: 3px;
    height: 16px;
    margin-bottom: 8px;
    padding-left: 92px;
}
.mode + .mode {
    padding-left: 38px;
}
fieldset {
    display: grid;
    grid-template-columns: 151px 72px;
    grid-template-rows: 22px 26px 27px 24px 80px 15px 24px;
    align-items: center;
    min-width: 0;
    height: 243px;
    margin: 0;
    padding: 0 0 0 7px;
    border: 1px solid #dcdcdc;
}
legend {
    padding: 0 2px;
    line-height: 18px;
    white-space: nowrap;
}
.full {
    grid-column: 1 / 3;
    display: flex;
    align-items: center;
    gap: 3px;
}
.last {
    grid-row: 7;
}
fieldset:disabled label {
    color: #999;
}
.stack {
    display: flex;
    flex-direction: column;
    gap: 11px;
    width: 118px;
    margin-left: 2px;
}
.stack button {
    height: 19px;
    line-height: 15px;
}
fieldset input[type="text"] {
    width: 60px;
    height: 22px;
    padding: 0 3px;
    border: 1px solid #7a7a7a;
    box-shadow: inset 0 0 0 1px #fff;
    background: #ffff80;
    font-size: 13px;
}
fieldset:disabled input[type="text"] {
    border-color: #ccc;
    background: #f0f0f0;
    color: #777;
}
.dialog select {
    appearance: none;
    width: 72px;
    height: 23px;
    padding: 0 3px;
    border: 1px solid #adadad;
    border-radius: 0;
    background: #e1e1e1 url("data:image/svg+xml,%3Csvg xmlns='http://www.w3.org/2000/svg' width='9' height='6'%3E%3Cpath d='M.5.500l4 4 4-4' fill='none' stroke='%23555'/%3E%3C/svg%3E") right 4px center no-repeat;
}
.stack + select {
    align-self: start;
    margin-top: 12px;
}
.dialog select:disabled {
    background-color: #ccc;
    border-color: #bfbfbf;
}
input[type="checkbox"], input[type="radio"] {
    appearance: none;
    flex: none;
    width: 13px;
    height: 13px;
    border: 1px solid #333;
    background: #fff center no-repeat;
}
input[type="checkbox"]:checked {
    background-image: url("data:image/svg+xml,%3Csvg xmlns='http://www.w3.org/2000/svg' width='11' height='11'%3E%3Cpath d='M1.500 5.500l3 3 5-6' fill='none' stroke='%23333' stroke-width='1.300'/%3E%3C/svg%3E");
}
input[type="checkbox"]:disabled {
    border-color: #aaa;
    opacity: 0.6;
}
input[type="radio"] {
    border-radius: 50%;
}
input[type="radio"]:checked {
    background-image: radial-gradient(#333 3px, transparent 4px);
}
```
FILE: script.js
```js
// builds the toolbar buttons from the data-tools lists
document.querySelectorAll("[data-tools]").forEach(function(bar) {
    bar.dataset.tools.split(" ").forEach(function(name) {
        var item;
        if (name === ":" || name === "|") {
            item = document.createElement("span");
            item.className = name === ":" ? "grip" : "sep";
        } else if (name === ">") {
            item = document.createElement("button");
            item.className = "flyout";
        } else {
            var icon = name.replace("+", "");
            item = document.createElement("button");
            item.className = "tool";
            if (icon !== name) {
                item.classList.add("more");
            }
            if (icon === "gauge") {
                item.classList.add("on");
            }
            item.setAttribute("aria-label", icon);
            item.innerHTML = '<svg><use href="#i-' + icon + '"/></svg>';
        }
        bar.appendChild(item);
    });
});
```
